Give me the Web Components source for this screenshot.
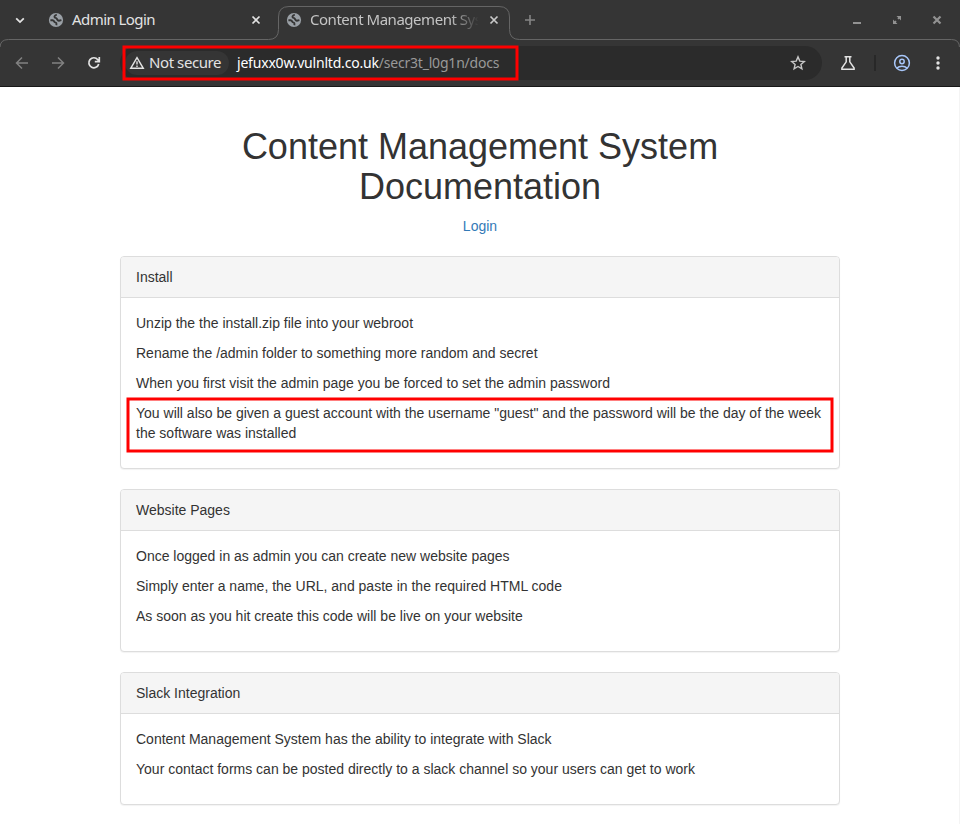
<!DOCTYPE html>
<html lang="en">
<head>
<meta charset="utf-8">
<title>Content Management System Documentation</title>
<style>
html,body{margin:0;height:824px;overflow:hidden;background:#fff}
</style>
</head>
<body>
<browser-window></browser-window>
<script>
const define = (name, html, init) => {
  const t = document.createElement('template');
  t.innerHTML = html;
  customElements.define(name, class extends HTMLElement {
    connectedCallback() {
      if (this.shadowRoot) return;
      this.attachShadow({mode: 'open'}).append(t.content.cloneNode(true));
      if (init) init.call(this, this.shadowRoot);
    }
  });
};

const ICONS = {
  chevron: [16, '<path d="M4.2 6.3 8 10.1 11.800 6.300" fill="none" stroke="currentColor" stroke-width="1.8"/>'],
  close: [16, '<path d="M4.5 4.5 11.5 11.5M11.5 4.5 4.5 11.5" stroke="currentColor" stroke-width="1.7"/>'],
  plus: [16, '<path d="M8 3V13M3 8H13" stroke="currentColor" stroke-width="1.6"/>'],
  globe: [16, '<circle cx="8" cy="8" r="7.1" fill="currentColor"/><g fill="none" stroke="#353535" stroke-width="1.9" stroke-linejoin="round"><path d="M8.8 2.6C6.2 3.2 5.800 5.600 7.600 5.900C9.300 6.100 8.900 8.500 10.800 8.700L13.400 8.100"/><path d="M2.400 8.200H4.600C6.300 8.300 5.700 9.900 7.200 10.300C8.900 10.700 8.700 11.500 8.300 13.300"/></g>'],
  back: [16, '<path d="M14 8H3M8 2.5 2.5 8 8 13.5" fill="none" stroke="currentColor" stroke-width="1.5"/>'],
  forward: [16, '<path d="M2 8H13M8 2.5 13.5 8 8 13.5" fill="none" stroke="currentColor" stroke-width="1.5"/>'],
  reload: [16, '<path d="M12.7 9A5 5 0 1 1 11.8 4.7L13.2 6.2M13.3 2V6.6H8.8" fill="none" stroke="currentColor" stroke-width="1.7"/>'],
  warn: [16, '<path d="M8 2.7 14.3 13.3H1.7Z" fill="none" stroke="currentColor" stroke-width="1.4"/><path d="M8 6.2V9.6M8 10.6V12" stroke="currentColor" stroke-width="1.4"/>'],
  star: [16, '<path d="M8 1.9 9.8 6.1 14.3 6.5 10.9 9.5 11.9 13.9 8 11.5 4.1 13.9 5.1 9.5 1.7 6.5 6.2 6.1Z" fill="none" stroke="currentColor" stroke-width="1.4"/>'],
  flask: [16, '<path d="M4.5 1.8H11.5M6.2 2V6.8L1.9 13.1V14.2H14.1V13.1L9.8 6.8V2" fill="none" stroke="currentColor" stroke-width="1.5"/>'],
  user: [18, '<g fill="none" stroke="currentColor" stroke-width="1.5"><circle cx="9" cy="9" r="7.4"/><circle cx="9" cy="7.5" r="2.2"/><path d="M3.9 14C6.4 11.6 11.6 11.6 14.1 14"/></g>'],
  dots: [16, '<g fill="currentColor"><circle cx="8" cy="3" r="1.7"/><circle cx="8" cy="8" r="1.7"/><circle cx="8" cy="13" r="1.7"/></g>'],
  minimize: [16, '<path d="M4 11H12" stroke="currentColor" stroke-width="2"/>'],
  restore: [16, '<path d="M7.5 4H12V8.5L10.3 6.8 9.5 7.6 8.4 6.5 9.2 5.7ZM4 7.5V12H8.5L6.8 10.3 7.6 9.5 6.5 8.4 5.7 9.2Z" fill="currentColor"/>'],
  wclose: [16, '<path d="M4.5 4.5 11.5 11.5M11.5 4.5 4.5 11.5" stroke="currentColor" stroke-width="2.2"/>']
};
define('ui-icon', '<style>:host{display:block;flex:none}svg{display:block}</style>', function (root) {
  const [s, body] = ICONS[this.getAttribute('name')];
  root.innerHTML += `<svg width="${s}" height="${s}" viewBox="0 0 ${s} ${s}">${body}</svg>`;
});

define('tab-strip', `<style>
:host{display:block;height:40px;position:relative;color:#e3e3e3;font:15px/20px "Noto Sans",sans-serif}
.outline{position:absolute;inset:0}
.row{position:relative;display:flex;align-items:center;height:40px;box-sizing:border-box;padding:0 15px 0 12px}
.t{white-space:nowrap;margin:0 0 2px 8px;flex:none}
.t1{width:170px;letter-spacing:-.57px}
.t2{width:168px;color:#c4c4c4;letter-spacing:-.47px;-webkit-mask-image:linear-gradient(90deg,#000 140px,transparent 169px)}
.g{color:#9aa0a6}
.wc{margin-left:auto;display:flex;gap:24px;color:#929292}
</style>
<svg class="outline" width="960" height="47"><path d="M0 47.5Q0 39.5 8.500 39.500H268.500Q278.500 39.500 278.500 29.500V17Q278.500 6.500 289 6.500H499Q509.500 6.500 509.500 17V29.500Q509.500 39.500 519.500 39.500H951.500Q959.500 39.500 959.500 47.500" fill="none" stroke="#656565"/></svg>
<div class="row"><ui-icon name="chevron"></ui-icon>
<ui-icon class="g" name="globe" style="margin-left:20px"></ui-icon><span class="t t1">Admin Login</span><ui-icon name="close" style="margin-left:6px"></ui-icon>
<ui-icon class="g" name="globe" style="margin-left:22px"></ui-icon><span class="t t2">Content Management Sys</span><ui-icon name="close" style="margin-left:8px;color:#c9c9c9"></ui-icon>
<ui-icon name="plus" style="margin-left:20px;color:#858585"></ui-icon>
<div class="wc"><ui-icon name="minimize"></ui-icon><ui-icon name="restore"></ui-icon><ui-icon name="wclose"></ui-icon></div></div>`);

define('address-bar', `<style>
:host{display:flex;align-items:center;box-sizing:border-box;width:702px;height:34px;border-radius:17px;background:#2b2b2b;padding:0 16px 0 5px;position:relative;font:15px/20px "Noto Sans",sans-serif;color:#e3e3e3;white-space:nowrap}
.chip{display:flex;align-items:center;gap:4px;box-sizing:border-box;width:104px;height:24px;border-radius:12px;background:#353535;padding-left:4px}
.ns{letter-spacing:-.42px;margin-bottom:2px}
.url{margin-left:8px;color:#fff;font-size:14px;letter-spacing:-.2px}
.path{color:#999}
ui-icon{color:#c7c7c7}
.chip ui-icon{color:#e3e3e3}
.star{margin-left:auto}
.mark{position:absolute;left:2px;top:-1px}
</style>
<div class="chip"><ui-icon name="warn"></ui-icon><span class="ns">Not secure</span></div>
<div class="url"><span class="host">jefuxx0w.vulnltd.co.uk</span><span class="path">/secr3t_l0g1n/docs</span></div>
<ui-icon class="star" name="star"></ui-icon>
<svg class="mark" width="397" height="36"><rect x="2" y="2" width="393" height="32" fill="none" stroke="#f00" stroke-width="3"/></svg>`);

define('tool-bar', `<style>
:host{display:flex;align-items:center;box-sizing:border-box;height:47px;border-bottom:1px solid #181818;padding:0 14px;color:#e3e3e3}
.dim{color:#818181}
.sep{width:2px;height:16px;background:#282828}
</style>
<ui-icon class="dim" name="back"></ui-icon><ui-icon class="dim" name="forward" style="margin-left:20px"></ui-icon><ui-icon name="reload" style="margin-left:20px"></ui-icon>
<address-bar style="margin-left:18px"></address-bar>
<ui-icon name="flask" style="margin-left:18px"></ui-icon><div class="sep" style="margin-left:18px"></div>
<ui-icon name="user" style="margin-left:17px;color:#a8c7fa"></ui-icon><ui-icon name="dots" style="margin-left:19px"></ui-icon>`);

define('doc-panel', `<style>
:host{display:block;border:1px solid #ddd;border-radius:4px;box-shadow:0 1px 1px rgba(0,0,0,.05);margin-bottom:20px;background:#fff}
.h{padding:10px 15px;background:#f5f5f5;border-bottom:1px solid #ddd;border-radius:3px 3px 0 0}
.b{padding:15px}
::slotted(p){margin:0 0 10px}
</style><div class="h"><slot name="title"></slot></div><div class="b"><slot></slot></div>`);

define('doc-page', `<style>
:host{display:block;box-sizing:border-box;height:737px;padding:40px 120px 0;font:14px/20px "Liberation Sans",Arial,sans-serif;color:#333;box-shadow:inset -1px 0 #f4f4f4}
h1{font-size:36px;line-height:39.6px;font-weight:500;text-align:center;margin:0 50px 10px}
.login{text-align:center;margin-bottom:20px}
a{color:#337ab7;text-decoration:none}
.hl{position:relative}
.mark{position:absolute;left:-10px;top:-6px}
doc-panel{width:720px;box-sizing:border-box}
</style>
<h1>Content Management System Documentation</h1>
<div class="login"><a href="#">Login</a></div>
<doc-panel><span slot="title">Install</span>
<p>Unzip the the install.zip file into your webroot</p>
<p>Rename the /admin folder to something more random and secret</p>
<p>When you first visit the admin page you be forced to set the admin password</p>
<p class="hl">You will also be given a guest account with the username "guest" and the password will be the day of the week the software was installed<svg class="mark" width="708" height="56"><rect x="2" y="2" width="704" height="52" fill="none" stroke="#f00" stroke-width="3"/></svg></p></doc-panel>
<doc-panel><span slot="title">Website Pages</span>
<p>Once logged in as admin you can create new website pages</p>
<p>Simply enter a name, the URL, and paste in the required HTML code</p>
<p>As soon as you hit create this code will be live on your website</p></doc-panel>
<doc-panel><span slot="title">Slack Integration</span>
<p>Content Management System has the ability to integrate with Slack</p>
<p>Your contact forms can be posted directly to a slack channel so your users can get to work</p></doc-panel>`);

define('browser-window', `<style>:host{display:block;width:960px;height:824px;overflow:hidden}.chrome{background:#353535;height:87px}</style>
<div class="chrome"><tab-strip></tab-strip><tool-bar></tool-bar></div><doc-page></doc-page>`);
</script>
</body>
</html>
